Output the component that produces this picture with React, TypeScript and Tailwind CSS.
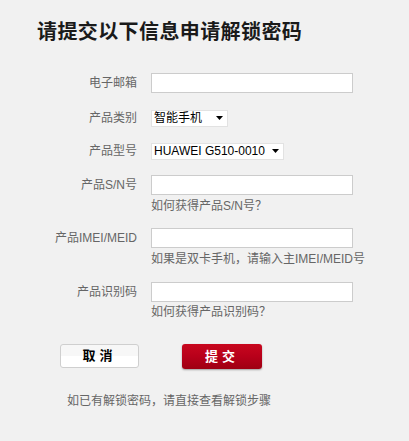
import React from 'react';

const font = { fontFamily: '"Liberation Sans", "Noto Sans CJK SC", sans-serif' };

const Label: React.FC<{ children: React.ReactNode }> = ({ children }) => (
  <div className="w-[100px] shrink-0 text-right text-[12px] leading-[20px] text-[#666]">{children}</div>
);

const TextInput: React.FC = () => (
  <div className="w-[202px] h-[20px] bg-white border border-[#cccccc]" />
);

const Select: React.FC<{ value: string; width: string }> = ({ value, width }) => (
  <div className={`${width} h-[17px] bg-white border border-[#e2e2e2] flex items-center justify-between pl-[2px] pr-[4px] whitespace-nowrap`}>
    <span className="text-[12px] leading-[15px] text-black whitespace-nowrap">{value}</span>
    <svg width="7" height="4" viewBox="0 0 7 4" className="shrink-0">
      <polygon points="0,0 7,0 3.5,4" fill="#000" />
    </svg>
  </div>
);

const Help: React.FC<{ children: React.ReactNode }> = ({ children }) => (
  <div className="ml-[114px] text-[12px] leading-[14px] text-[#666]">{children}</div>
);

export default function App() {
  return (
    <div className="w-[409px] h-[441px] bg-[#f1f1f1] pl-[37px] overflow-hidden" style={font}>
      <h1 className="pt-[22px] text-[20px] leading-[20px] font-bold text-[#1a1a1a] tracking-[0.4px]">
        请提交以下信息申请解锁密码
      </h1>

      <div className="mt-[31px] flex items-center gap-[14px]">
        <Label>电子邮箱</Label>
        <TextInput />
      </div>

      <div className="mt-[15px] flex items-center gap-[14px]">
        <Label>产品类别</Label>
        <Select value="智能手机" width="w-[77px]" />
      </div>

      <div className="mt-[13px] flex items-center gap-[14px]">
        <Label>产品型号</Label>
        <Select value="HUAWEI G510-0010" width="w-[133px]" />
      </div>

      <div className="mt-[14px] flex items-center gap-[14px]">
        <Label>产品S/N号</Label>
        <TextInput />
      </div>
      <div className="mt-[4px]">
        <Help>如何获得产品S/N号？</Help>
      </div>

      <div className="mt-[15px] flex items-center gap-[14px]">
        <Label>产品IMEI/MEID</Label>
        <TextInput />
      </div>
      <div className="mt-[4px]">
        <Help>如果是双卡手机，请输入主IMEI/MEID号</Help>
      </div>

      <div className="mt-[16px] flex items-center gap-[14px]">
        <Label>产品识别码</Label>
        <TextInput />
      </div>
      <div className="mt-[3px]">
        <Help>如何获得产品识别码？</Help>
      </div>

      <div className="mt-[25px] ml-[23px] flex gap-[43px]">
        <button className="w-[79px] h-[24px] rounded-[3px] border border-[#cfcfcf] bg-[linear-gradient(to_bottom,#f7f7f7_0%,#f7f7f7_50%,#ffffff_50%,#ffffff_100%)] text-[13px] font-bold text-black tracking-[4px] flex items-center justify-center">
          取消
        </button>
        <button className="w-[80px] h-[25px] rounded-[3px] bg-[linear-gradient(to_bottom,#c8071e_0%,#b8001a_50%,#9e0012_100%)] shadow-[0_1px_2px_rgba(0,0,0,0.35)] text-[13px] font-bold text-white tracking-[4px] flex items-center justify-center">
          提交
        </button>
      </div>

      <div className="mt-[25px] ml-[30px] text-[12px] leading-[14px] text-[#666]">
        如已有解锁密码，请直接查看解锁步骤
      </div>
    </div>
  );
}
